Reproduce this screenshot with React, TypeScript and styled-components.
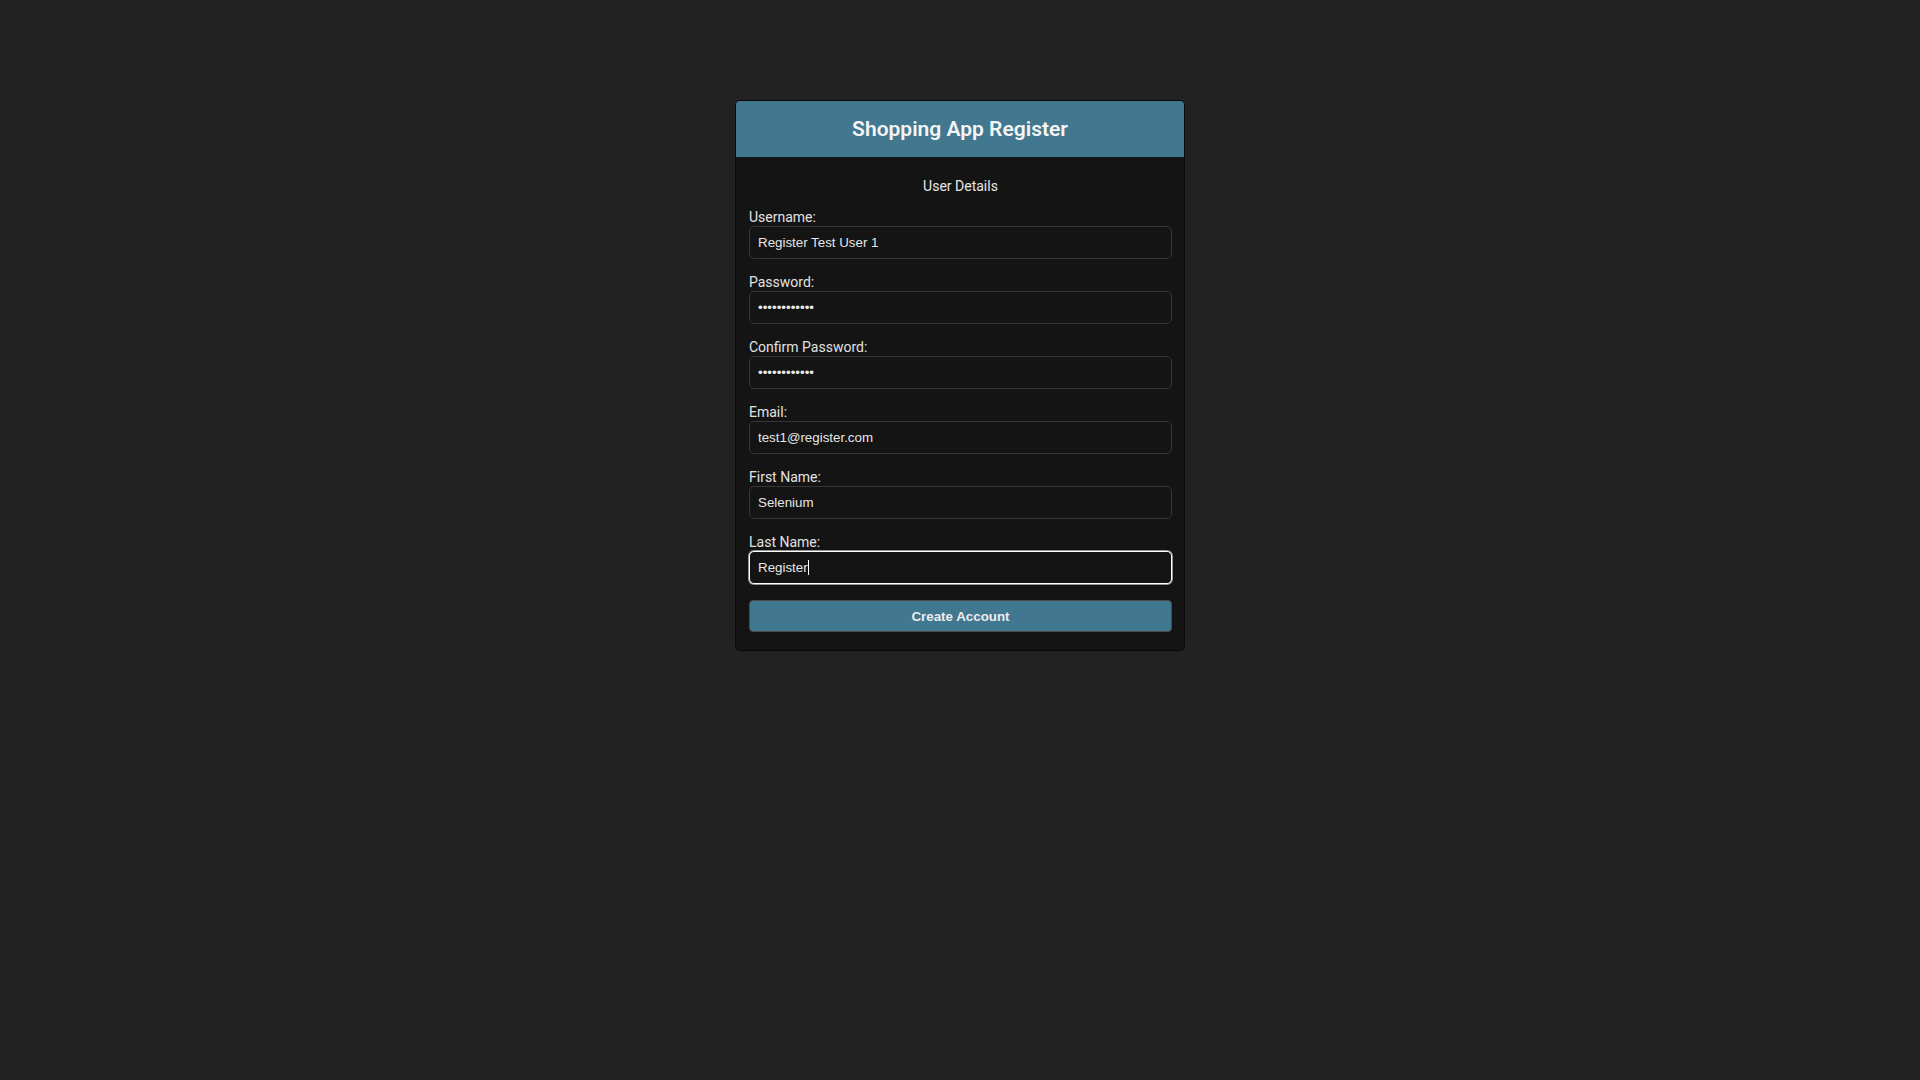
import { useEffect, useRef, useState } from "react"
import styled, { createGlobalStyle } from "styled-components"

const GlobalStyle = createGlobalStyle`
    html, body {
        margin: 0;
        padding: 0;
        background-color: #222222;
        font-family: 'Roboto', 'Liberation Sans', sans-serif;
        color: #e6e6e6;
    }
    #root {
        min-height: 100vh;
    }
`
const Page = styled.div`
    display: flex;
    justify-content: center;
    padding-top: 100px;
`
const Card = styled.div`
    width: 450px;
    box-sizing: border-box;
    background-color: #141414;
    border: 1px solid #0a0a0a;
    border-radius: 5px;
    overflow: hidden;
`
const Header = styled.div`
    height: 56px;
    background-color: #41778f;
    display: flex;
    align-items: center;
    justify-content: center;
`
const Titulo = styled.h1`
    margin: 0;
    font-family: 'Roboto', sans-serif;
    font-size: 21px;
    font-weight: 600;
    color: #f4f4f4;
`
const Body = styled.form`
    padding: 21px 12px 18px 13px;
    display: flex;
    flex-direction: column;
`
const Subtitulo = styled.div`
    font-size: 14px;
    line-height: 17px;
    text-align: center;
    color: #e6e6e6;
    margin-bottom: 12px;
`
const Campo = styled.div`
    display: flex;
    flex-direction: column;
    margin-bottom: 13px;
`
const Label = styled.label`
    padding-top: 2px;
    font-size: 14px;
    line-height: 17px;
    color: #e2e2e2;
`
const InputWrap = styled.div`
    position: relative;
`
const Input = styled.input`
    box-sizing: border-box;
    width: 100%;
    height: 33px;
    padding: 0 8px;
    background-color: #141414;
    border: 1px solid #363636;
    border-radius: 5px;
    color: #e6e6e6;
    caret-color: transparent;
    font-family: 'Liberation Sans', Arial, sans-serif;
    font-size: 13.33px;
    outline: none;

    &:focus {
        border-color: #ffffff;
        box-shadow: 0 0 0 1px rgba(255, 255, 255, 0.55);
    }
`
const Caret = styled.span`
    position: absolute;
    top: 9px;
    width: 1px;
    height: 15px;
    background-color: #ffffff;
    pointer-events: none;
`
const Boton = styled.button`
    margin-top: 3px;
    height: 32px;
    width: 100%;
    background-color: #41778f;
    border: 1px solid #4a4a4a;
    border-radius: 4px;
    color: #ececec;
    font-family: 'Liberation Sans', Arial, sans-serif;
    font-size: 13.33px;
    font-weight: 700;
    cursor: pointer;
`

const campos = [
    { id: "username", label: "Username:", type: "text", value: "Register Test User 1" },
    { id: "password", label: "Password:", type: "password", value: "Register1234" },
    { id: "confirm", label: "Confirm Password:", type: "password", value: "Register1234" },
    { id: "email", label: "Email:", type: "email", value: "test1@register.com" },
    { id: "firstName", label: "First Name:", type: "text", value: "Selenium" },
    { id: "lastName", label: "Last Name:", type: "text", value: "Register" },
]

export default function App() {
    const lastRef = useRef<HTMLInputElement>(null)
    const [caretX, setCaretX] = useState<number | null>(null)

    useEffect(() => {
        const el = lastRef.current
        if (!el) return
        el.focus()
        el.setSelectionRange(el.value.length, el.value.length)
        const ctx = document.createElement("canvas").getContext("2d")
        if (ctx) {
            ctx.font = "13.33px 'Liberation Sans', Arial, sans-serif"
            setCaretX(9 + ctx.measureText(el.value).width)
        }
    }, [])

    return <>
        <GlobalStyle />
        <Page>
            <Card>
                <Header>
                    <Titulo>Shopping App Register</Titulo>
                </Header>
                <Body onSubmit={(e) => e.preventDefault()}>
                    <Subtitulo>User Details</Subtitulo>
                    {campos.map((c) => (
                        <Campo key={c.id}>
                            <Label htmlFor={c.id}>{c.label}</Label>
                            <InputWrap>
                                <Input
                                    id={c.id}
                                    type={c.type}
                                    defaultValue={c.value}
                                    ref={c.id === "lastName" ? lastRef : undefined}
                                />
                                {c.id === "lastName" && caretX !== null &&
                                    <Caret style={{ left: caretX }} />}
                            </InputWrap>
                        </Campo>
                    ))}
                    <Boton type="submit">Create Account</Boton>
                </Body>
            </Card>
        </Page>
    </>
}
